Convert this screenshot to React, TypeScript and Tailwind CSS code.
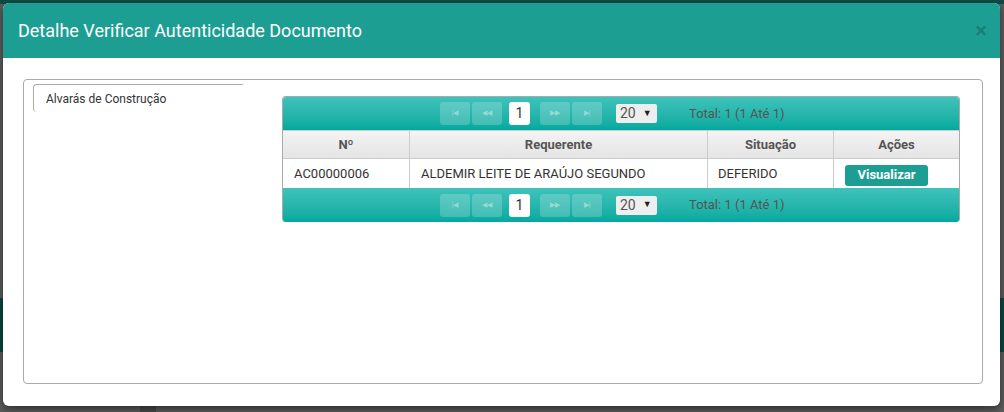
const font = { fontFamily: "Roboto, 'Liberation Sans', sans-serif" };

function PagerButton({ glyph }: { glyph: string }) {
  return (
    <div className="flex h-[23px] w-[30px] items-center justify-center rounded-[3px] bg-white/20 text-[7px] text-white/40">
      {glyph}
    </div>
  );
}

function Paginator({ bottom }: { bottom?: boolean }) {
  return (
    <div
      className={`flex h-[33px] items-center bg-gradient-to-b from-[#3dc3bb] to-[#00a99e] ${
        bottom ? "h-[34px] rounded-b-[3px]" : "rounded-t-[3px]"
      }`}
    >
      <div className="ml-[157px] flex items-center gap-[2px]">
        <PagerButton glyph="|◀" />
        <PagerButton glyph="◀◀" />
      </div>
      <div className="ml-[7px] flex h-[23px] w-[21px] items-center justify-center rounded-[3px] bg-white text-[14px] text-[#333]">
        1
      </div>
      <div className="ml-[10px] flex items-center gap-[2px]">
        <PagerButton glyph="▶▶" />
        <PagerButton glyph="▶|" />
      </div>
      <div className="ml-[14px] flex h-[19px] w-[41px] items-center gap-[7px] rounded-[2px] bg-[#eeeeee] pl-[4px] text-[14px] text-[#555]">
        <span>20</span>
        <span className="text-[9px] text-[#222]">▼</span>
      </div>
      <div className="ml-[32px] text-[13px] text-[#555]">Total: 1 (1 Até 1)</div>
    </div>
  );
}

export default function App() {
  return (
    <div className="relative h-[412px] w-[1004px] overflow-hidden bg-[#5c5c5c]" style={font}>
      {/* backdrop hints of the page behind */}
      <div className="absolute left-0 top-0 h-[4px] w-full bg-[#0f4c46]" />
      <div className="absolute left-0 top-[298px] h-[54px] w-full bg-[#0d4541]" />
      <div className="absolute bottom-0 left-[140px] h-[6px] w-[16px] bg-[#4a4a4a]" />

      <div className="absolute left-[3px] top-[3px] flex h-[403px] w-[997px] flex-col overflow-hidden rounded-[6px] bg-white shadow-[0_3px_9px_rgba(0,0,0,0.5)]">
        {/* header */}
        <div className="flex h-[55px] shrink-0 items-center justify-between bg-[#1d9e93] pl-[15px] pr-[13px]">
          <h4 className="text-[18px] text-white">Detalhe Verificar Autenticidade Documento</h4>
          <span className="text-[22px] font-bold leading-none text-black/20">×</span>
        </div>

        {/* body */}
        <div className="flex-1 pl-[20px] pr-[17px] pt-[21px]">
          <div className="flex h-[305px] rounded-[4px] border border-[#aaaaaa] pt-[4px] pl-[9px]">
            <div className="w-[249px] shrink-0">
              <div className="h-[28px] w-[210px] rounded-l-[4px] border-l border-t border-[#aaaaaa] pl-[12px] pt-[5px] text-[12px] text-[#333]">
                Alvarás de Construção
              </div>
            </div>

            <div className="mt-[12px] h-[126px] w-[678px] rounded-[3px] border border-[#aaaaaa]">
              <Paginator />
              <div className="grid grid-cols-[127px_298px_126px_1fr] text-[13px]">
                <div className="flex h-[28px] items-center justify-center border-r border-t border-[#cccccc] bg-gradient-to-b from-[#f3f3f3] to-[#e5e5e5] font-bold text-[#555]">
                  Nº
                </div>
                <div className="flex h-[28px] items-center justify-center border-r border-t border-[#cccccc] bg-gradient-to-b from-[#f3f3f3] to-[#e5e5e5] font-bold text-[#555]">
                  Requerente
                </div>
                <div className="flex h-[28px] items-center justify-center border-r border-t border-[#cccccc] bg-gradient-to-b from-[#f3f3f3] to-[#e5e5e5] font-bold text-[#555]">
                  Situação
                </div>
                <div className="flex h-[28px] items-center justify-center border-t border-[#cccccc] bg-gradient-to-b from-[#f3f3f3] to-[#e5e5e5] font-bold text-[#555]">
                  Ações
                </div>

                <div className="flex h-[30px] items-center border-r border-t border-[#cccccc] pl-[11px] text-[#333]">
                  AC00000006
                </div>
                <div className="flex h-[30px] items-center border-r border-t border-[#cccccc] pl-[11px] text-[#333]">
                  ALDEMIR LEITE DE ARAÚJO SEGUNDO
                </div>
                <div className="flex h-[30px] items-center border-r border-t border-[#cccccc] pl-[10px] text-[#333]">
                  DEFERIDO
                </div>
                <div className="flex h-[30px] items-center border-t border-[#cccccc] pl-[11px]">
                  <button className="mt-[3px] h-[21px] w-[83px] rounded-[3px] bg-[#1d9e93] text-[13px] font-bold text-white">
                    Visualizar
                  </button>
                </div>
              </div>
              <Paginator bottom />
            </div>
          </div>
        </div>
      </div>
    </div>
  );
}
